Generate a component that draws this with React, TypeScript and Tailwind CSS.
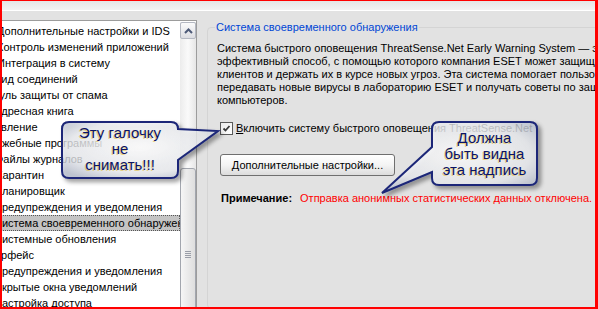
const items = [
  { t: "Дополнительные настройки и IDS", c: "ml-[-3px]" },
  { t: "Контроль изменений приложений", c: "ml-[-3px]" },
  { t: "Интеграция в систему", c: "ml-[-3px]" },
  { t: "Вид соединений", c: "ml-[-6px]" },
  { t: "Модуль защиты от спама", c: "ml-[-22px]" },
  { t: "Адресная книга", c: "ml-[-6px]" },
  { t: "Обновление", c: "ml-[-26px]" },
  { t: "Служебные программы", c: "ml-[-18px]" },
  { t: "Файлы журналов", c: "ml-[-5px]" },
  { t: "Карантин", c: "ml-[-4px]" },
  { t: "Планировщик", c: "ml-[-6px]" },
  { t: "Предупреждения и уведомления", c: "ml-[-6px]" },
  { t: "Система своевременного обнаружения", c: "ml-[-6px]", sel: true },
  { t: "Системные обновления", c: "ml-[-6px]" },
  { t: "Интерфейс", c: "ml-[-24px]" },
  { t: "Предупреждения и уведомления", c: "ml-[-6px]" },
  { t: "Скрытые окна уведомлений", c: "ml-[-6px]" },
  { t: "Настройка доступа", c: "ml-[-6px]" },
];

const para = [
  "Система быстрого оповещения ThreatSense.Net Early Warning System — это",
  "эффективный способ, с помощью которого компания ESET может защищать",
  "клиентов и держать их в курсе новых угроз. Эта система помогает пользователям",
  "передавать новые вирусы в лабораторию ESET и получать советы по защите",
  "компьютеров.",
];

function Scrollbar() {
  return (
    <div className="mt-[1px] flex w-[16px] shrink-0 flex-col bg-gradient-to-r from-[#ececec] via-[#fafafa] to-[#e6e6e6]">
      <div className="flex h-[17px] shrink-0 items-center justify-center rounded-[2px] border border-[#b4b8c2] bg-gradient-to-b from-[#fbfbfb] to-[#dcdde2]">
        <svg width="9" height="6" viewBox="0 0 9 6">
          <path d="M1 5 L4.5 1.5 L8 5" fill="none" stroke="#4d5a78" strokeWidth="2" />
        </svg>
      </div>
      <div className="h-[129px] shrink-0" />
      <div className="flex h-[172px] shrink-0 flex-col items-center justify-center gap-[1px] rounded-[3px] border border-[#a2a6ae] bg-gradient-to-r from-[#f6f6f6] to-[#dedede]">
        <div className="h-px w-[6px] bg-[#9a9ea8]" />
        <div className="h-px w-[6px] bg-[#9a9ea8]" />
        <div className="h-px w-[6px] bg-[#9a9ea8]" />
        <div className="h-px w-[6px] bg-[#9a9ea8]" />
      </div>
    </div>
  );
}

function Bubbles() {
  return (
    <svg className="pointer-events-none absolute left-0 top-0" width="598" height="309">
      <defs>
        <radialGradient id="bf" cx="50%" cy="45%" r="65%">
          <stop offset="0%" stopColor="#ffffff" stopOpacity="0.85" />
          <stop offset="70%" stopColor="#eef0f4" stopOpacity="0.72" />
          <stop offset="100%" stopColor="#b9c0d0" stopOpacity="0.75" />
        </radialGradient>
        <filter id="sh" x="-20%" y="-20%" width="150%" height="150%">
          <feDropShadow dx="3" dy="3" stdDeviation="2" floodColor="#000" floodOpacity="0.45" />
        </filter>
      </defs>
      <path
        d="M69 122 H171 Q178 122 178 129 L218 131 L178 160 V171 Q178 178 171 178 H69 Q62 178 62 171 V129 Q62 122 69 122 Z"
        fill="url(#bf)"
        stroke="#1c2878"
        strokeWidth="2"
        filter="url(#sh)"
      />
      <path
        d="M439 122 H530 Q537 122 537 129 V178 Q537 185 530 185 H439 Q432 185 432 178 V172 L382 193 L432 147 V129 Q432 122 439 122 Z"
        fill="url(#bf)"
        stroke="#1c2878"
        strokeWidth="2"
        filter="url(#sh)"
      />
    </svg>
  );
}

export default function App() {
  return (
    <div className="relative flex h-[309px] w-[598px] flex-col overflow-hidden bg-[#e2e2e2] font-['Liberation_Sans',Arial,sans-serif] text-[11px] text-black">
      <div className="h-[11px] shrink-0 border-b border-white bg-gradient-to-b from-[#e4e4e4] to-[#f3f3f3]" />
      <div className="flex min-h-0 flex-1">
        {/* tree list */}
        <div className="flex w-[197px] shrink-0 flex-col pt-[9px]">
          <div className="flex min-h-0 flex-1 border-r border-t border-[#9c9c9c] bg-white">
            <div className="w-[180px] shrink-0 overflow-hidden pt-[2px]">
              {items.map((it, i) => (
                <div
                  key={i}
                  className={`flex h-[16px] items-center whitespace-nowrap leading-[16px] ${
                    it.sel ? "bg-[#c4c4c4] outline-1 -outline-offset-1 outline-dotted outline-[#555]" : ""
                  }`}
                >
                  <span className={it.c}>{it.t}</span>
                </div>
              ))}
            </div>
            <Scrollbar />
          </div>
        </div>

        {/* settings panel */}
        <div className="flex min-w-0 flex-1 flex-col pl-[10px] pr-[5px] pt-[10px]">
          <fieldset className="min-h-0 flex-1 rounded-[4px] border border-[#d4d4d4] pl-[9px]">
            <legend className="ml-[-2px] px-[1px] leading-[13px] text-[#0046d5]">
              Система своевременного обнаружения
            </legend>
            <div className="overflow-hidden">
              <div className="mt-[8px] leading-[13px]">
                {para.map((l, i) => (
                  <div key={i} className="whitespace-nowrap">
                    {l}
                  </div>
                ))}
              </div>

              <div className="ml-[3px] mt-[15px] flex h-[13px] items-center whitespace-nowrap">
                <div className="flex h-[13px] w-[13px] shrink-0 items-center justify-center border border-[#5a5a5a] bg-gradient-to-br from-[#ececec] to-white">
                  <svg width="9" height="9" viewBox="0 0 9 9">
                    <path d="M1.5 4.5 L3.5 6.5 L7.5 2" fill="none" stroke="#3a3a3a" strokeWidth="1.8" />
                  </svg>
                </div>
                <span className="ml-[3px]">
                  <span className="underline">В</span>ключить систему быстрого оповещения ThreatSense.Net
                </span>
              </div>

              <button className="ml-[3px] mt-[19px] flex h-[22px] w-[175px] items-center justify-center rounded-[3px] border border-[#6f6f6f] bg-gradient-to-b from-white via-[#f4f4f4] to-[#dcdcdc] text-[11px]">
                <span>
                  <span className="underline">Д</span>ополнительные настройки...
                </span>
              </button>

              <div className="ml-[4px] mt-[16px] flex gap-[8px] whitespace-nowrap leading-[13px]">
                <span className="font-bold">Примечание:</span>
                <span className="text-[#ff0000]">Отправка анонимных статистических данных отключена.</span>
              </div>
            </div>
          </fieldset>
        </div>
      </div>

      <Bubbles />

      <div className="pointer-events-none absolute left-[62px] top-[125px] w-[116px] text-center text-[15px] leading-[16px] text-[#0a1466] [text-shadow:-1px_1px_0_rgba(225,190,60,0.6)]">
        <div>Эту галочку</div>
        <div>не</div>
        <div>снимать!!!</div>
      </div>
      <div className="pointer-events-none absolute left-[432px] top-[130px] w-[105px] text-center text-[15px] leading-[16px] text-[#0a1466] [text-shadow:-1px_1px_0_rgba(225,190,60,0.6)]">
        <div>Должна</div>
        <div>быть видна</div>
        <div>эта надпись</div>
      </div>

      <div className="pointer-events-none absolute inset-0 border-b-2 border-l-2 border-r-[3px] border-t border-[#ff0000]" />
    </div>
  );
}
